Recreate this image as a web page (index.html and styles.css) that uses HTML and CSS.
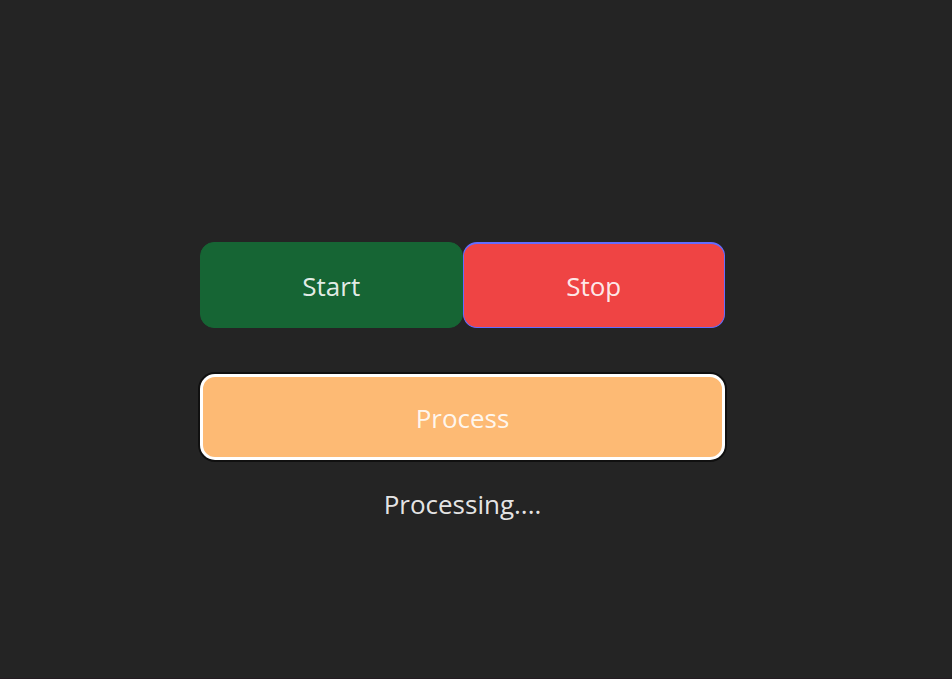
FILE: index.html
```html
<!DOCTYPE html>
<html lang="en">
<head>
<meta charset="utf-8">
<title>Process control</title>
<link rel="stylesheet" href="styles.css">
</head>
<body>
<main class="panel">
  <div class="row">
    <button class="btn start" type="button">Start</button>
    <button class="btn stop" type="button">Stop</button>
  </div>
  <button class="btn process" type="button">Process</button>
  <p class="status" role="status">Processing....</p>
</main>
</body>
</html>
```
FILE: styles.css
```css
* {
  box-sizing: border-box;
}

body {
  margin: 0;
  min-height: 100vh;
  padding: 242px 227px 0 200px;
  border-bottom: 1px solid #241c22;
  background: #242424;
  color: rgba(255, 255, 255, 0.9);
  font: 26px/42px "Open Sans", "Noto Sans", sans-serif;
}

.panel {
  display: flex;
  flex-direction: column;
}

.row {
  display: flex;
  margin-bottom: 46px;
}

.btn {
  width: 100%;
  padding: 22px 32px 20px;
  border: 1px solid transparent;
  border-radius: 14px;
  color: inherit;
  font: inherit;
}

.start {
  border-color: #166534;
  background: #166534;
}

.stop {
  border-color: #646cff;
  border-top-width: 2px;
  padding-top: 21px;
  background: #ef4444;
}

.process {
  border: 3px solid #fff;
  border-radius: 15px;
  background: #fdba74;
  padding: 20px 32px 18px;
  box-shadow: 0 0 0 2px #101010;
}

.status {
  margin: 23px 0 0;
  text-align: center;
}
```
